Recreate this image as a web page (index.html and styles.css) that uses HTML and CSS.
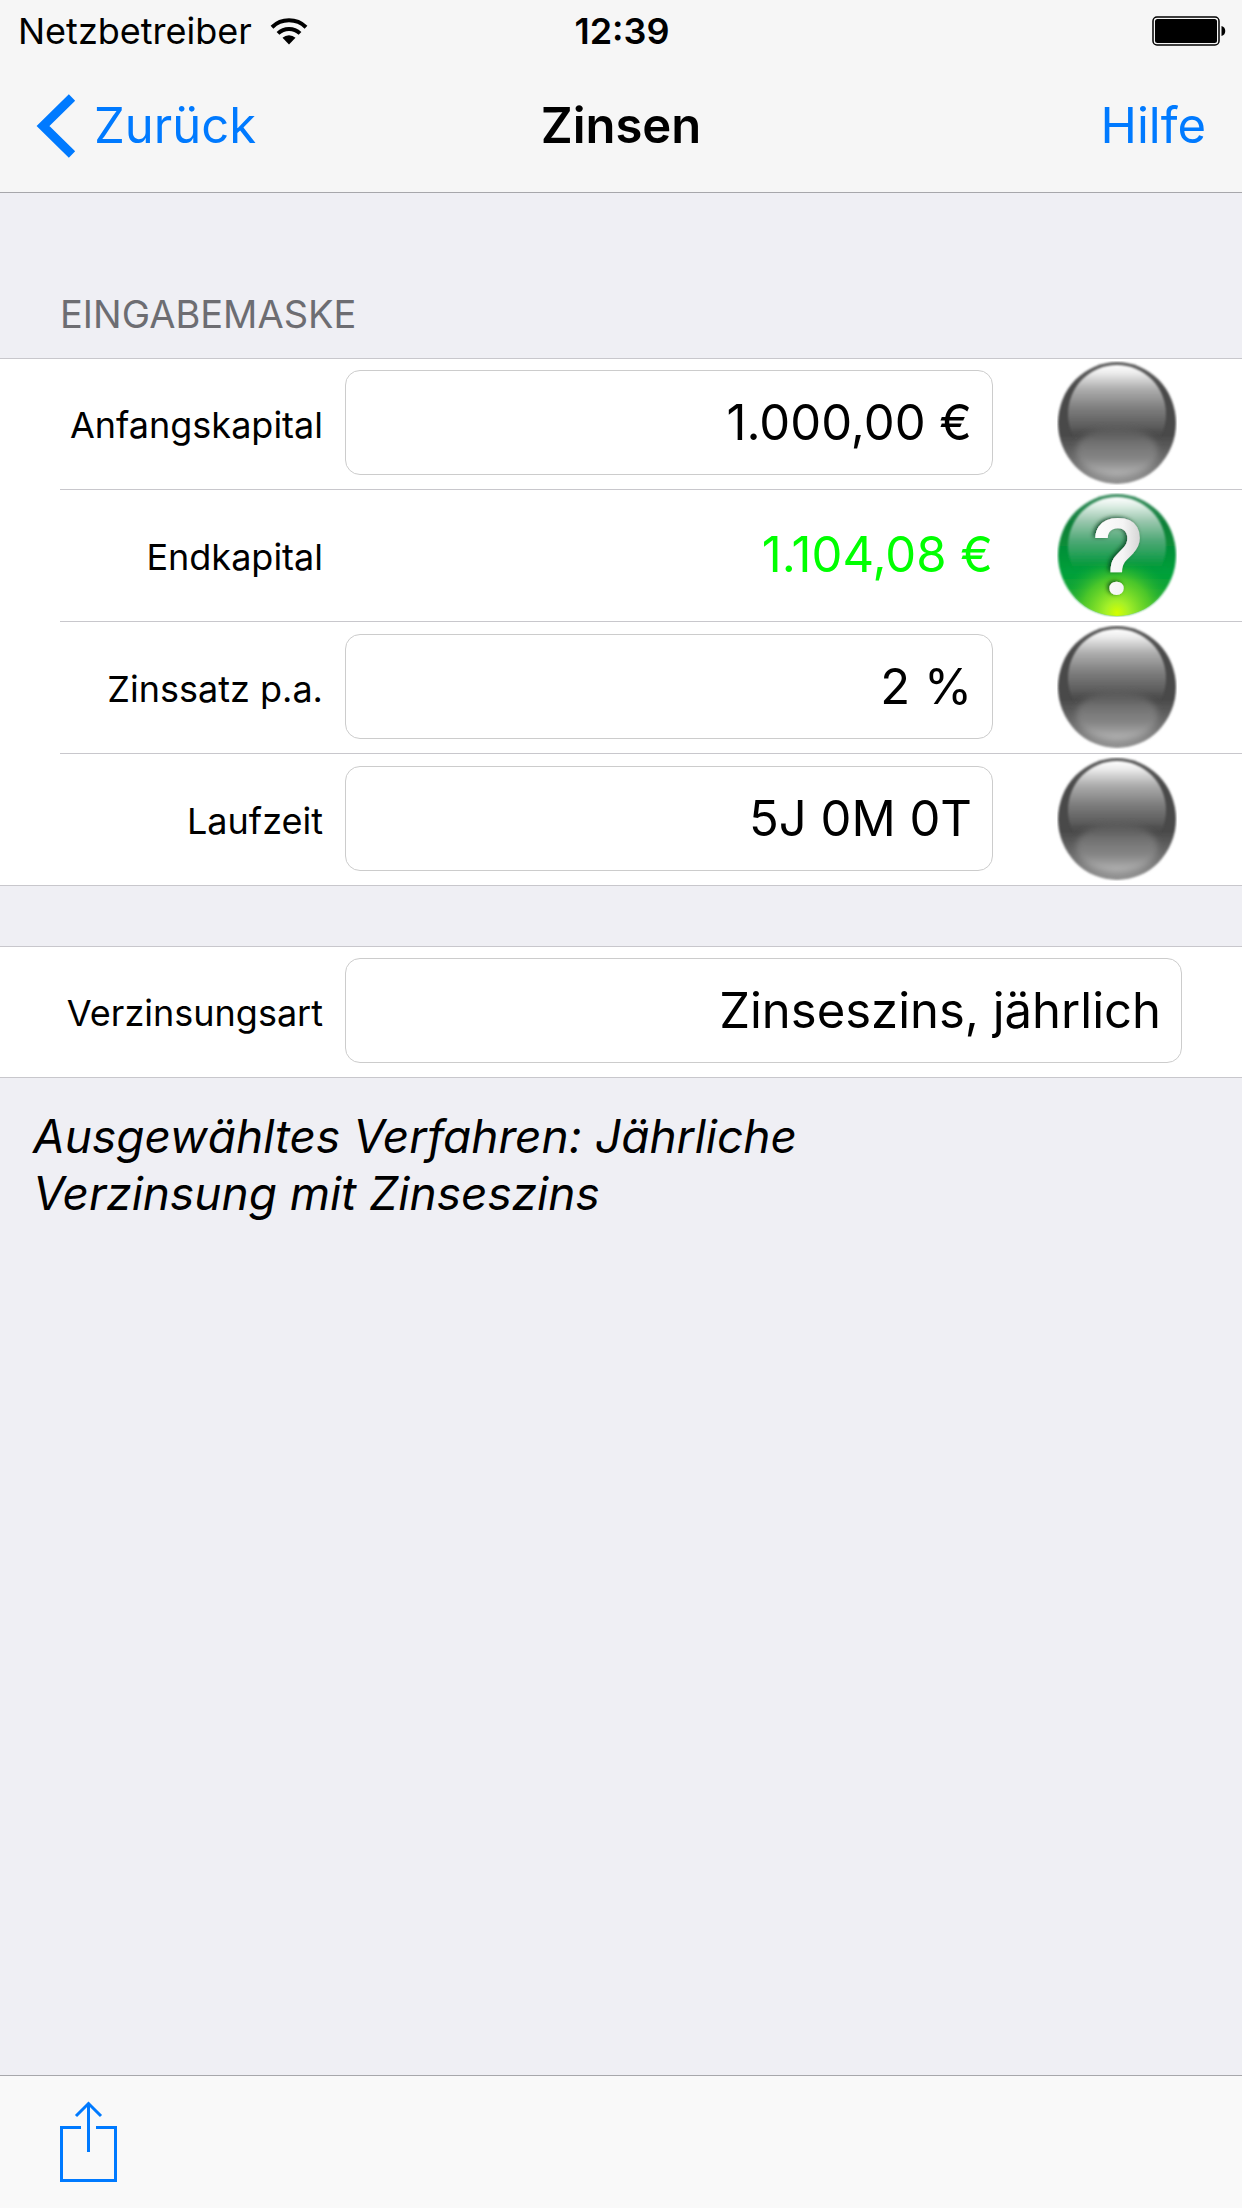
FILE: index.html
```html
<!DOCTYPE html>
<html lang="de">
<head>
  <meta charset="utf-8">
  <meta name="viewport" content="width=device-width, initial-scale=1">
  <title>Zinsen</title>
  <link rel="stylesheet" href="styles.css">
</head>
<body>
  <svg class="defs" aria-hidden="true">
    <defs>
      <linearGradient id="gray-base" x1="0" y1="0" x2="0" y2="1">
        <stop offset="0" stop-color="#606060"/>
        <stop offset=".25" stop-color="#484848"/>
        <stop offset=".6" stop-color="#4a4a4a"/>
        <stop offset="1" stop-color="#929292"/>
      </linearGradient>
      <linearGradient id="gray-shine" x1="0" y1="0" x2="0" y2="1">
        <stop offset="0" stop-color="#fff"/>
        <stop offset=".08" stop-color="#ececec"/>
        <stop offset=".25" stop-color="#acacac"/>
        <stop offset=".45" stop-color="#7c7c7c"/>
        <stop offset=".62" stop-color="#5e5e5e"/>
        <stop offset=".75" stop-color="#505050" stop-opacity="0"/>
      </linearGradient>
      <linearGradient id="gray-pool" x1="0" y1="0" x2="0" y2="1">
        <stop offset="0" stop-color="#606060" stop-opacity=".5"/>
        <stop offset=".35" stop-color="#747474"/>
        <stop offset=".65" stop-color="#868686"/>
        <stop offset="1" stop-color="#bababa"/>
      </linearGradient>
      <linearGradient id="green-base" x1="0" y1="0" x2="0" y2="1">
        <stop offset="0" stop-color="#3f8f64"/>
        <stop offset=".25" stop-color="#0c8038"/>
        <stop offset=".65" stop-color="#00a03a"/>
        <stop offset="1" stop-color="#2fae2c"/>
      </linearGradient>
      <linearGradient id="green-shine" x1="0" y1="0" x2="0" y2="1">
        <stop offset="0" stop-color="#fff"/>
        <stop offset=".08" stop-color="#e2f0e8"/>
        <stop offset=".25" stop-color="#98c6ac"/>
        <stop offset=".45" stop-color="#4da875"/>
        <stop offset=".62" stop-color="#1c9e50"/>
        <stop offset=".75" stop-color="#0c9c40" stop-opacity="0"/>
      </linearGradient>
      <radialGradient id="green-glow" cx="60" cy="120" r="58" gradientUnits="userSpaceOnUse">
        <stop offset="0" stop-color="#d4ff00"/>
        <stop offset=".2" stop-color="#a4f028"/>
        <stop offset=".6" stop-color="#55cc28" stop-opacity=".85"/>
        <stop offset="1" stop-color="#10a838" stop-opacity="0"/>
      </radialGradient>
      <linearGradient id="mark-fill" x1="0" y1="0" x2="1" y2="0">
        <stop offset="0" stop-color="#fff"/>
        <stop offset=".6" stop-color="#f4f4f4"/>
        <stop offset="1" stop-color="#cfcfcf"/>
      </linearGradient>
      <filter id="soft"><feGaussianBlur stdDeviation="3"/></filter>
      <filter id="edge"><feGaussianBlur stdDeviation=".8"/></filter>
      <filter id="mark-shadow" x="-30%" y="-30%" width="160%" height="160%">
        <feDropShadow dx="-2" dy="-1" stdDeviation="2" flood-color="#003814" flood-opacity=".8"/>
      </filter>
      <symbol id="orb-gray" viewBox="0 0 120 124">
        <ellipse cx="60" cy="62" rx="59" ry="61" fill="url(#gray-base)" filter="url(#edge)"/>
        <ellipse cx="60" cy="53" rx="49" ry="49" fill="url(#gray-shine)" filter="url(#edge)"/>
        <ellipse cx="60" cy="91" rx="41" ry="25" fill="url(#gray-pool)" filter="url(#soft)"/>
      </symbol>
      <symbol id="orb-green" viewBox="0 0 120 124">
        <ellipse cx="60" cy="62" rx="59" ry="61" fill="url(#green-base)" filter="url(#edge)"/>
        <ellipse cx="60" cy="62" rx="58" ry="61" fill="url(#green-glow)"/>
        <ellipse cx="60" cy="53" rx="49" ry="49" fill="url(#green-shine)" filter="url(#edge)"/>
        <text class="orb-mark" x="61" y="101" text-anchor="middle" fill="url(#mark-fill)" filter="url(#mark-shadow)">?</text>
      </symbol>
    </defs>
  </svg>

  <header class="top">
    <div class="status">
      <div class="carrier">
        <span>Netzbetreiber</span>
        <svg class="wifi" viewBox="0 0 38 28" aria-hidden="true">
          <g fill="none" stroke="#000" stroke-width="4">
            <path d="M2 10.200a24.500 24.500 0 0 1 34 0"/>
            <path d="M8 16.400a16 16 0 0 1 22 0"/>
          </g>
          <path d="M19 27.500l-6.500-6.700a9.500 9.500 0 0 1 13 0z"/>
        </svg>
      </div>
      <time class="clock">12:39</time>
      <svg class="battery" viewBox="0 0 74 30" aria-label="Akku voll">
        <rect x="1" y="1" width="66" height="28" rx="4" fill="none" stroke="#000" stroke-width="1.500"/>
        <rect x="3" y="3" width="62" height="24" rx="2.500"/>
        <path d="M69.500 10c5 1 5 9 0 10z"/>
      </svg>
    </div>
    <nav class="bar">
      <a class="back" href="#zurueck">
        <svg class="chevron" viewBox="0 0 40 64" aria-hidden="true">
          <path d="M36 3.500L7 32l29 28.500" fill="none" stroke="#007aff" stroke-width="9"/>
        </svg>
        <span>Zurück</span>
      </a>
      <h1 class="title">Zinsen</h1>
      <a class="help" href="#hilfe">Hilfe</a>
    </nav>
  </header>

  <main class="content">
    <h2 class="section-title">EINGABEMASKE</h2>
    <div class="group">
      <div class="row">
        <label class="label" for="anfang">Anfangskapital</label>
        <input class="field" id="anfang" type="text" value="1.000,00 €">
        <button class="orb" type="button" aria-label="Anfangskapital berechnen"><svg><use href="#orb-gray"/></svg></button>
      </div>
      <div class="row">
        <label class="label" for="ende">Endkapital</label>
        <output class="result" id="ende">1.104,08 €</output>
        <button class="orb" type="button" aria-label="Endkapital berechnen"><svg><use href="#orb-green"/></svg></button>
      </div>
      <div class="row">
        <label class="label" for="zinssatz">Zinssatz p.a.</label>
        <input class="field" id="zinssatz" type="text" value="2 %">
        <button class="orb" type="button" aria-label="Zinssatz berechnen"><svg><use href="#orb-gray"/></svg></button>
      </div>
      <div class="row">
        <label class="label" for="laufzeit">Laufzeit</label>
        <input class="field" id="laufzeit" type="text" value="5J 0M 0T">
        <button class="orb" type="button" aria-label="Laufzeit berechnen"><svg><use href="#orb-gray"/></svg></button>
      </div>
    </div>

    <div class="group">
      <div class="row">
        <label class="label" for="art">Verzinsungsart</label>
        <input class="field" id="art" type="text" value="Zinseszins, jährlich">
      </div>
    </div>
    <p class="note">Ausgewähltes Verfahren: Jährliche Verzinsung mit Zinseszins</p>
  </main>

  <footer class="toolbar">
    <button class="share" type="button" aria-label="Teilen">
      <svg viewBox="0 0 57 82" aria-hidden="true">
        <g fill="none" stroke="#007aff" stroke-width="3">
          <path d="M21 26.500H1.500v53h54v-53H36"/>
          <path d="M28.500 51V2M16 15L28.500 2.500 41 15"/>
        </g>
      </svg>
    </button>
  </footer>
</body>
</html>
```
FILE: styles.css
```css
* {
  box-sizing: border-box;
}

body {
  margin: 0;
  min-height: 100vh;
  display: flex;
  flex-direction: column;
  background: #efeff4;
  color: #000;
  font-family: Inter, "Liberation Sans", sans-serif;
}

a {
  color: #007aff;
  text-decoration: none;
}

button {
  padding: 0;
  border: 0;
  background: none;
}

svg {
  display: block;
}

.defs {
  position: absolute;
  width: 0;
  height: 0;
}

.top {
  background: #f6f6f6;
  border-bottom: 1px solid #a7a7ab;
}

.status,
.bar {
  display: grid;
  grid-template-columns: 1fr auto 1fr;
  align-items: center;
}

.status {
  height: 60px;
  padding: 0 16px 0 18px;
  font-size: 36px;
  line-height: 62px;
}

.carrier {
  display: flex;
  align-items: center;
  gap: 18px;
}

.wifi {
  width: 38px;
  height: 28px;
}

.clock {
  font-weight: 600;
}

.battery {
  width: 74px;
  height: 30px;
  justify-self: end;
}

.bar {
  height: 132px;
  padding: 0 36px;
  font-size: 49px;
  line-height: 60px;
}

.back {
  display: flex;
  align-items: center;
  gap: 18px;
}

.chevron {
  width: 40px;
  height: 64px;
}

.title {
  margin: 0;
  font-size: 49px;
  font-weight: 600;
}

.help {
  justify-self: end;
}

.content {
  flex: 1;
}

.section-title {
  margin: 0;
  padding: 96px 60px 18px;
  color: #6d6d72;
  font-size: 38px;
  font-weight: 400;
  line-height: 51px;
}

.group {
  background: #fff;
}

.group + .group {
  margin-top: 60px;
}

.row {
  position: relative;
  display: flex;
  align-items: flex-start;
  height: 132px;
  padding: 12px 60px 0;
}

.row::after {
  content: "";
  position: absolute;
  left: 60px;
  right: 0;
  bottom: 0;
  border-bottom: 1px solid #c8c7cc;
}

.row:last-child::after {
  left: 0;
}

.row:first-child {
  border-top: 1px solid #c8c7cc;
  padding-top: 11px;
}

.label {
  width: 263px;
  margin-right: 22px;
  font-size: 36px;
  line-height: 110px;
  text-align: right;
  white-space: nowrap;
}

.field,
.result {
  flex: 1;
  min-width: 0;
  height: 105px;
  font: inherit;
  font-size: 49px;
  text-align: right;
}

.field {
  padding: 0 20px;
  border: 1px solid #cccccc;
  border-radius: 15px;
  background: #fff;
  color: #000;
}

.result {
  color: #00ff00;
  line-height: 105px;
}

.orb {
  width: 120px;
  height: 124px;
  margin: -9px 5px 0 64px;
}

.orb svg {
  width: 120px;
  height: 124px;
}

.orb-mark {
  font-family: Roboto, sans-serif;
  font-size: 106px;
  font-weight: 500;
}

.note {
  width: 75%;
  margin: 0;
  padding: 30px 33px;
  font-size: 46px;
  font-style: italic;
  line-height: 57px;
}

.toolbar {
  height: 133px;
  padding: 25px 60px;
  background: #f9f9f9;
  border-top: 1px solid #a7a7ab;
}

.share svg {
  width: 57px;
  height: 82px;
}
```
